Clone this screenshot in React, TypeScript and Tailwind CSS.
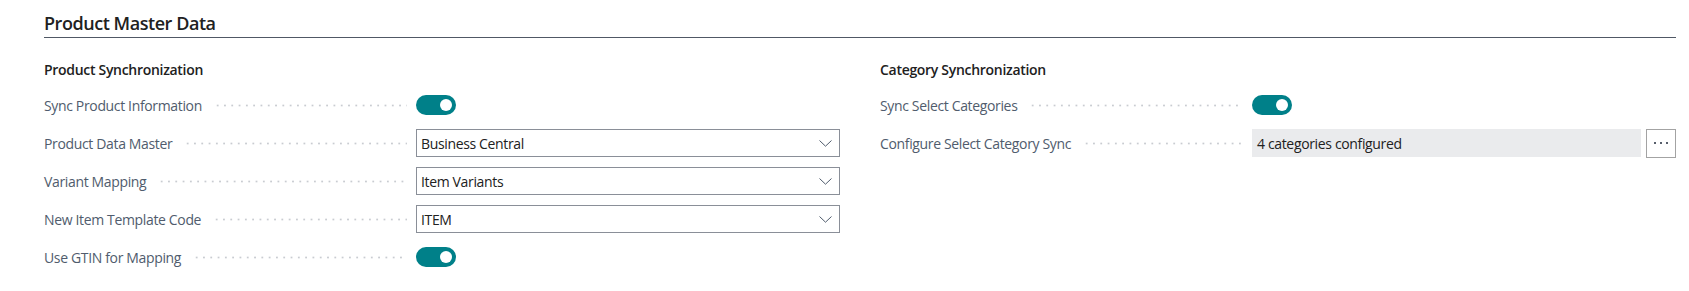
import React from 'react';

type Row =
  | { label: string; kind: 'toggle' }
  | { label: string; kind: 'select'; value: string }
  | { label: string; kind: 'lookup'; value: string };

const productRows: Row[] = [
  { label: 'Sync Product Information', kind: 'toggle' },
  { label: 'Product Data Master', kind: 'select', value: 'Business Central' },
  { label: 'Variant Mapping', kind: 'select', value: 'Item Variants' },
  { label: 'New Item Template Code', kind: 'select', value: 'ITEM' },
  { label: 'Use GTIN for Mapping', kind: 'toggle' },
];

const categoryRows: Row[] = [
  { label: 'Sync Select Categories', kind: 'toggle' },
  { label: 'Configure Select Category Sync', kind: 'lookup', value: '4 categories configured' },
];

const Toggle = () => (
  <div className="flex h-[20px] w-[40px] items-center justify-end rounded-full bg-[#008089] pr-[4px]">
    <div className="h-[12px] w-[12px] rounded-full bg-white" />
  </div>
);

const Select = ({ value }: { value: string }) => (
  <div className="flex h-[28px] w-[424px] items-center justify-between border border-[#8a8f98] bg-white pl-[4px] pr-[7px] text-[#212121]">
    <span>{value}</span>
    <svg width="13" height="7" viewBox="0 0 13 7" fill="none">
      <path d="M0.5 0.5L6.5 6.2L12.5 0.5" stroke="#505c6d" strokeWidth="1" />
    </svg>
  </div>
);

const Lookup = ({ value }: { value: string }) => (
  <div className="flex w-[424px] items-center gap-[5px]">
    <div className="flex h-[28px] flex-1 items-center bg-[#eaebed] pl-[5px] text-[#212121]">{value}</div>
    <button
      type="button"
      className="flex h-[29px] w-[30px] items-center justify-center gap-[4px] border border-[#a3a3a3] bg-white"
    >
      <span className="h-[2px] w-[2px] rounded-full bg-[#1f2a3a]" />
      <span className="h-[2px] w-[2px] rounded-full bg-[#1f2a3a]" />
      <span className="h-[2px] w-[2px] rounded-full bg-[#1f2a3a]" />
    </button>
  </div>
);

const Field = ({ row }: { row: Row }) => (
  <div className="flex h-[38px] items-center">
    <div className="flex w-[372px] items-center pr-[9px]">
      <span className="whitespace-nowrap text-[#505c6d]">{row.label}</span>
      {/* dotted leader */}
      <span className="ml-[12px] h-[3px] flex-1 bg-[radial-gradient(circle,#c9ccd1_0.9px,transparent_1.2px)] bg-[length:7.3px_3px] bg-repeat-x" />
    </div>
    {row.kind === 'toggle' && <Toggle />}
    {row.kind === 'select' && <Select value={row.value} />}
    {row.kind === 'lookup' && <Lookup value={row.value} />}
  </div>
);

const Group = ({ title, rows }: { title: string; rows: Row[] }) => (
  <div>
    <h3 className="text-[14px] font-semibold leading-[20px] tracking-[-0.3px] text-[#212121]">{title}</h3>
    <div className="mt-[6px]">
      {rows.map((r) => (
        <Field key={r.label} row={r} />
      ))}
    </div>
  </div>
);

export default function App() {
  return (
    <div
      className="min-h-screen bg-white pl-[44px] pr-[13px] pt-[9px] text-[14px] tracking-[-0.35px]"
      style={{ fontFamily: '"Segoe UI", "Open Sans", sans-serif' }}
    >
      <div className="h-[29px] border-b border-[#505865]">
        <h2 className="text-[18px] font-semibold leading-[28px] tracking-[-0.45px] text-[#212121]">Product Master Data</h2>
      </div>
      <div className="mt-[22px] grid grid-cols-2 gap-x-[40px]">
        <Group title="Product Synchronization" rows={productRows} />
        <Group title="Category Synchronization" rows={categoryRows} />
      </div>
    </div>
  );
}
